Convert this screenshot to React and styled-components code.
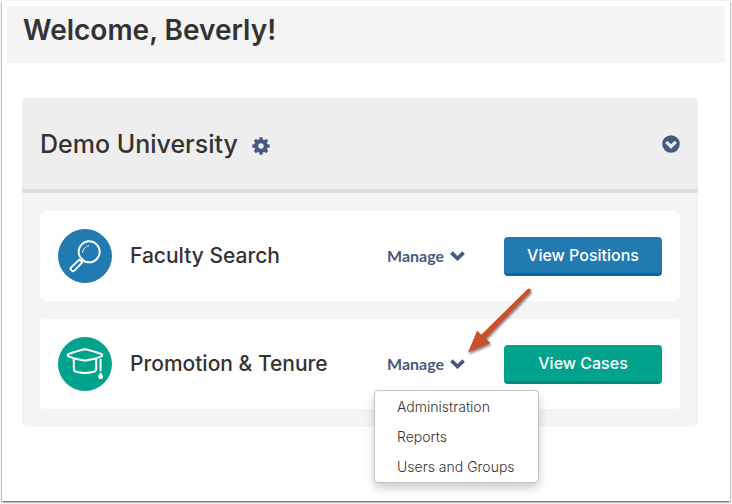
import styled, { createGlobalStyle } from "styled-components";

const GEAR_TEETH = [0, 45, 90, 135, 180, 225, 270, 315];

const GearIcon = () => (
	<svg width="18" height="18" viewBox="0 0 18 18" aria-hidden="true">
		<g fill="#465a80">
			{GEAR_TEETH.map((angle) => (
				<path
					key={angle}
					d="M7.1 4 7.5.3h3l.4 3.7z"
					transform={`rotate(${angle} 9 9)`}
				/>
			))}
		</g>
		<circle cx="9" cy="9" r="4.7" fill="none" stroke="#465a80" strokeWidth="4" />
	</svg>
);

const CircleChevronIcon = () => (
	<svg width="18" height="18" viewBox="0 0 18 18" aria-hidden="true">
		<circle cx="9" cy="9" r="8.8" fill="#465a80" />
		<path d="M4.2 6.9 9 11.5l4.8-4.6" fill="none" stroke="#eee" strokeWidth="3.2" />
	</svg>
);

const ChevronIcon = () => (
	<svg width="15" height="10" viewBox="0 0 15 10" aria-hidden="true">
		<path d="M1.4 1.7 7.5 7.5l6.1-5.8" fill="none" stroke="#465a80" strokeWidth="3.7" />
	</svg>
);

const SearchIcon = () => (
	<svg width="54" height="54" viewBox="0 0 54 54" aria-hidden="true">
		<g fill="none" stroke="#fff" strokeWidth="1.9" strokeLinecap="round" strokeLinejoin="round">
			<circle cx="31.2" cy="22.8" r="10.5" />
			<path d="M21.3 30.6 13.4 38.1a2.3 2.3 0 0 0 3.3 3.3l7.6-8z" />
			<path d="m22.8 32 1.8-1.9" />
			<path d="M24.6 23.3c.2-2.5 1.4-4.2 3.2-5.3M29.2 17.2l1.5-.3" strokeWidth="1" />
		</g>
	</svg>
);

const CapIcon = () => (
	<svg width="54" height="54" viewBox="0 0 54 54" aria-hidden="true">
		<g fill="none" stroke="#fff" strokeWidth="2" strokeLinejoin="round">
			<path d="M10.4 17.2c5-2.3 10.8-3.5 16.6-5 5.8 1.5 11.6 2.7 16.6 5 .9.5.9 1.6 0 2.1-5 2.2-10.8 3.1-16.6 4.5-5.8-1.4-11.6-2.3-16.6-4.5-.9-.5-.9-1.6 0-2.1z" />
			<path d="M15.8 22v9.4c0 2 .7 2.9 2.4 3.3 5.6 1.5 12 1.5 17.6 0 1.7-.4 2.4-1.3 2.4-3.3V22" />
			<path d="M42.6 22v12.4" />
		</g>
		<path d="M42.6 35.6c1.4 1.5 2.3 2.8 2.3 4.1 0 1.5-.9 2.4-2.3 2.4s-2.3-.9-2.3-2.4c0-1.3.9-2.6 2.3-4.1z" fill="#fff" />
	</svg>
);

const App = () => (
	<>
		<GlobalStyle />
		<Page>
			<WelcomeBar>
				<h1>Welcome, Beverly!</h1>
			</WelcomeBar>
			<Panel>
				<PanelHeader>
					<h2>Demo University</h2>
					<IconButton aria-label="Institution settings">
						<GearIcon />
					</IconButton>
					<IconButton $end aria-label="Collapse section">
						<CircleChevronIcon />
					</IconButton>
				</PanelHeader>
				<ProductList>
					<Product>
						<Badge $color="#217bb1">
							<SearchIcon />
						</Badge>
						<h3>Faculty Search</h3>
						<ManageWrap>
							<ManageButton aria-expanded="false">
								Manage
								<ChevronIcon />
							</ManageButton>
						</ManageWrap>
						<ViewButton $color="#217bb1" $edge="#12689b">
							View Positions
						</ViewButton>
					</Product>
					<Product>
						<Badge $color="#02a38c">
							<CapIcon />
						</Badge>
						<h3>Promotion &amp; Tenure</h3>
						<ManageWrap>
							<ManageButton aria-expanded="true">
								Manage
								<ChevronIcon />
							</ManageButton>
							<Menu>
								<li>
									<a href="#administration">Administration</a>
								</li>
								<li>
									<a href="#reports">Reports</a>
								</li>
								<li>
									<a href="#users">Users and Groups</a>
								</li>
							</Menu>
							<Pointer width="70" height="70" viewBox="0 0 70 70" aria-hidden="true">
								<path
									d="M62.4 2.2c1.9-1.7 4.6.5 3 2.7L20.8 51.6l4.6 4.5L3 65.4 12.2 43.4l4 4.4z"
									fill="#cb5028"
								/>
							</Pointer>
						</ManageWrap>
						<ViewButton $color="#02a38c" $edge="#038974">
							View Cases
						</ViewButton>
					</Product>
				</ProductList>
			</Panel>
		</Page>
	</>
);

export default App;

const GlobalStyle = createGlobalStyle`
	* {
		box-sizing: border-box;
	}

	body {
		margin: 0;
		background-color: #fff;
		color: #333;
		font-family: Inter, "Open Sans", sans-serif;
	}

	h1, h2, h3 {
		margin: 0;
		font-weight: 500;
	}

	button {
		padding: 0;
		border: none;
		font-family: inherit;
		cursor: pointer;
	}
`;

const Page = styled.div`
	display: flow-root;
	min-height: calc(100vh - 4px);
	margin: 1px 2px 3px;
	padding: 5px;
	background-color: #fff;
	box-shadow: 0 1px 2px rgba(0, 0, 0, 0.75);
`;

const WelcomeBar = styled.header`
	height: 57px;
	padding: 5px 16px;
	background-color: #f4f4f4;

	h1 {
		font-size: 28px;
		line-height: 38px;
		font-weight: 600;
	}
`;

const Panel = styled.section`
	margin: 35px 27px 0 15px;
	border-radius: 5px;
	background-color: #f4f4f4;
`;

const PanelHeader = styled.div`
	display: flex;
	align-items: center;
	height: 95px;
	padding: 0 18px;
	border-bottom: 4px solid #ddd;
	border-radius: 5px 5px 0 0;
	background-color: #eee;

	h2 {
		margin-right: 14px;
		font-size: 25px;
		line-height: 32px;
	}
`;

const IconButton = styled.button`
	display: flex;
	margin-top: ${(props) => (props.$end ? "0" : "4px")};
	margin-left: ${(props) => (props.$end ? "auto" : "0")};
	background: none;
`;

const ProductList = styled.div`
	display: flex;
	flex-direction: column;
	gap: 18px;
	padding: 18px;
`;

const Product = styled.article`
	display: flex;
	align-items: center;
	padding: 18px;
	border-radius: 5px;
	background-color: #fff;

	h3 {
		flex: 1;
		font-size: 21px;
		line-height: 28px;
	}
`;

const Badge = styled.div`
	width: 54px;
	height: 54px;
	margin-right: 18px;
	border-radius: 50%;
	background-color: ${(props) => props.$color};
`;

const ManageWrap = styled.div`
	position: relative;
	margin-right: 39px;
`;

const ManageButton = styled.button`
	display: flex;
	align-items: center;
	justify-content: space-between;
	width: 78px;
	height: 24px;
	background: none;
	color: #465a80;
	font-family: Lato, sans-serif;
	font-size: 16px;
	font-weight: 700;
	line-height: 24px;
`;

const ViewButton = styled.button`
	width: 158px;
	height: 39px;
	border-bottom: 3px solid ${(props) => props.$edge};
	border-radius: 4px;
	background-color: ${(props) => props.$color};
	color: #fff;
	font-size: 16px;
	font-weight: 500;
`;

const Menu = styled.ul`
	position: absolute;
	top: 38px;
	left: -13px;
	z-index: 1;
	width: 165px;
	margin: 0;
	padding: 1px 0 0;
	border: 1px solid #c4c4c4;
	border-radius: 4px;
	background-color: #fff;
	box-shadow: 0 5px 10px rgba(0, 0, 0, 0.2);
	list-style: none;

	a {
		display: block;
		padding: 0 22px;
		color: #333;
		font-size: 14px;
		font-weight: 300;
		line-height: 30px;
		text-decoration: none;
		white-space: nowrap;
	}
`;

const Pointer = styled.svg`
	position: absolute;
	top: -65px;
	left: 78px;
	z-index: 2;
	filter: drop-shadow(1px 2px 1px rgba(0, 0, 0, 0.45));
	pointer-events: none;
`;
